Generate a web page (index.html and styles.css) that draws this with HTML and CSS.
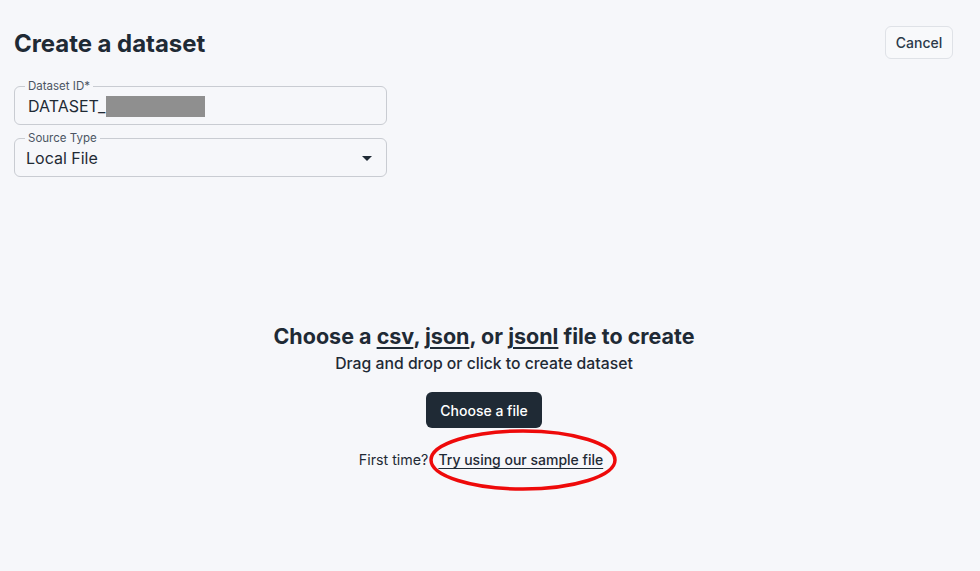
FILE: index.html
```html
<!DOCTYPE html>
<html>
<head>
<meta charset="utf-8">
<link rel="stylesheet" href="styles.css">
</head>
<body>
<div class="page">
  <header class="top">
    <h1 class="title">Create a dataset</h1>
    <button class="cancel">Cancel</button>
  </header>
  <div class="fields">
    <fieldset class="field">
      <legend class="legend">Dataset ID*</legend>
      <div class="value">DATASET_<span class="redact"></span></div>
    </fieldset>
    <fieldset class="field">
      <legend class="legend">Source Type</legend>
      <div class="value select">Local File
        <svg class="caret" width="10" height="5" viewBox="0 0 10 5"><path d="M0 0h10L5 5z" fill="#1f2a35"/></svg>
      </div>
    </fieldset>
  </div>
  <section class="drop">
    <h2 class="drop-title">Choose a <u>csv</u>, <u>json</u>, or <u>jsonl</u> file to create</h2>
    <p class="drop-sub">Drag and drop or click to create dataset</p>
    <button class="choose">Choose a file</button>
    <p class="first">First time? <span class="link-wrap"><a class="sample" href="#">Try using our sample file</a><svg class="ring" width="194" height="66" viewBox="0 0 194 66"><ellipse cx="97" cy="33" rx="92" ry="29" fill="none" stroke="#ee0a0a" stroke-width="3.5"/></svg></span></p>
  </section>
</div>
</body>
</html>
```
FILE: styles.css
```css
* { box-sizing: border-box; }
html, body { margin: 0; padding: 0; }
body {
  background: #f6f7fa;
  font-family: Inter, "Noto Sans", sans-serif;
  color: #1f2a35;
  width: 980px;
  height: 571px;
  overflow: hidden;
}
.page {
  padding: 26px 26px 0 14px;
}
.top {
  display: flex;
  justify-content: space-between;
  align-items: flex-start;
}
.title {
  margin: 5px 0 0;
  font-size: 24px;
  font-weight: 700;
  letter-spacing: -0.05px;
  line-height: 26px;
}
.cancel {
  margin-right: 1px;
  height: 33px;
  width: 68px;
  border: 1px solid #dfe2e7;
  border-radius: 6px;
  background: #f8f9fb;
  font-family: inherit;
  font-size: 14px;
  font-weight: 500;
  color: #2b3a4a;
  padding: 0;
}
.fields {
  display: flex;
  flex-direction: column;
  gap: 7px;
  margin-top: 21px;
  width: 373px;
}
.field {
  margin: 0;
  height: 45px;
  padding: 0 12px 0 12px;
  border: 1px solid #c9ccd2;
  border-radius: 6px;
  position: relative;
}
.legend {
  font-size: 11.5px;
  color: #4b5563;
  padding: 0 3px;
  margin-left: -2px;
  line-height: 12px;
}
.value {
  display: flex;
  align-items: center;
  font-size: 16px;
  height: 26px;
  margin-top: 1px;
  color: #1f2a35;
}
.field:first-child .value { padding-left: 1px; }
.redact {
  display: inline-block;
  width: 99px;
  height: 21px;
  background: #8f8f8f;
  margin-left: 1px;
}
.select { justify-content: space-between; margin-left: -1px; }
.caret { margin-right: 2px; }
.drop {
  display: flex;
  flex-direction: column;
  align-items: center;
  margin-top: 145px;
}
.drop-title {
  margin: 0;
  font-size: 21.5px;
  font-weight: 700;
  line-height: 28px;
}
.drop-title u { text-underline-offset: 3px; text-decoration-thickness: 2px; }
.drop-sub {
  margin: 0;
  font-size: 15.75px;
  font-weight: 500;
  line-height: 26px;
  padding-top: 1px;
}
.choose {
  margin-top: 15px;
  height: 36px;
  width: 116px;
  border: none;
  border-radius: 6px;
  background: #1f2a35;
  color: #ffffff;
  font-family: inherit;
  font-size: 14px;
  font-weight: 500;
  padding: 0;
}
.first {
  margin: 22px 0 0;
  padding-right: 6px;
  font-size: 14.25px;
  color: #1f2a35;
  line-height: 20px;
}
.link-wrap { position: relative; display: inline-block; margin-left: 6px; }
.sample {
  color: #1f2a35;
  font-weight: 500;
  font-size: 14px;
  text-underline-offset: 3px;
}
.ring {
  position: absolute;
  left: -12px;
  top: -23px;
  pointer-events: none;
}
```
